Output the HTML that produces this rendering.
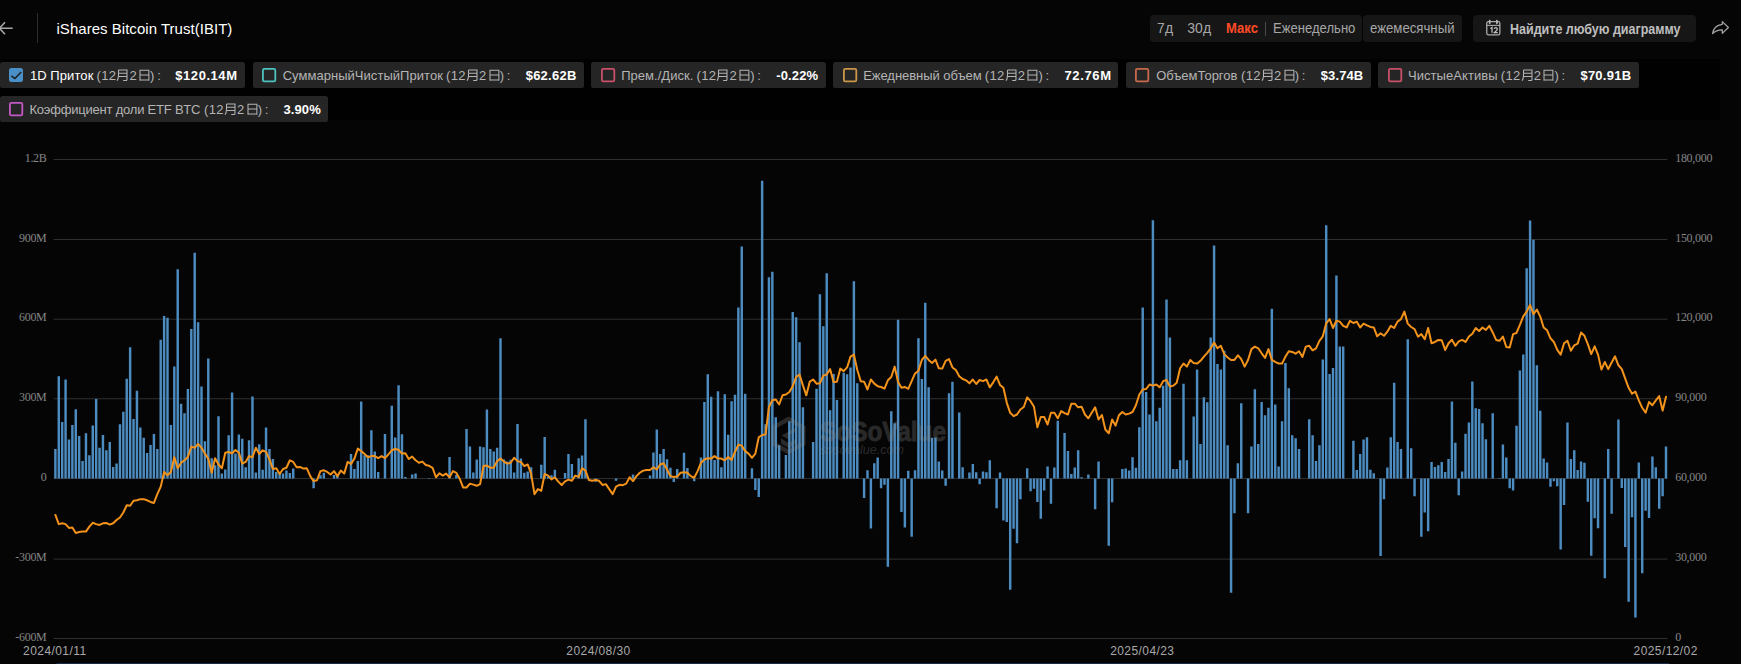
<!DOCTYPE html><html><head><meta charset="utf-8"><title>iShares Bitcoin Trust(IBIT)</title><style>
html,body{margin:0;padding:0;background:#050505;}
body{width:1741px;height:664px;overflow:hidden;position:relative;font-family:"Liberation Sans",sans-serif;}
.chart{position:absolute;left:0;top:0;}
.t{position:absolute;white-space:nowrap;line-height:1;}
.box{position:absolute;background:#161616;border-radius:4px;}
.chip{position:absolute;background:#252525;border-radius:2.5px;}
.cb{position:absolute;width:14.2px;height:14.2px;border-radius:2.5px;box-sizing:border-box;}
.yl{position:absolute;font-family:"Liberation Serif",serif;font-size:12px;color:#868686;line-height:1;white-space:nowrap;letter-spacing:-0.3px;}
.xl{position:absolute;font-size:12px;color:#a8a8a8;line-height:1;white-space:nowrap;}
.d{position:absolute;font-size:13px;color:#b4b4b4;line-height:1;white-space:nowrap;letter-spacing:0.3px;}
.d svg{display:inline-block;vertical-align:baseline;}
</style></head><body>
<div style="position:absolute;left:0;top:58.5px;width:1720px;height:61px;background:#010101"></div>
<svg class="chart" width="1741" height="664" viewBox="0 0 1741 664"><rect x="53.7" y="159" width="1613.6" height="1" fill="#303030"/><rect x="53.7" y="239" width="1613.6" height="1" fill="#303030"/><rect x="53.7" y="318.7" width="1613.6" height="1" fill="#303030"/><rect x="53.7" y="398.25" width="1613.6" height="1" fill="#303030"/><rect x="53.7" y="478.05" width="1613.6" height="1" fill="#303030"/><rect x="53.7" y="558.6" width="1613.6" height="1" fill="#303030"/><rect x="53.7" y="638" width="1613.6" height="1" fill="#303030"/><path fill="#4c8cc0" d="M54.16 478.55h2.45V448.96h-2.45zM57.55 478.55h2.45V376.16h-2.45zM60.95 478.55h2.45V421.97h-2.45zM64.35 478.55h2.45V379.5h-2.45zM67.75 478.55h2.45V439.46h-2.45zM71.14 478.55h2.45V424.97h-2.45zM74.54 478.55h2.45V409.31h-2.45zM77.94 478.55h2.45V435.96h-2.45zM81.34 478.55h2.45V460.95h-2.45zM84.74 478.55h2.45V433.13h-2.45zM88.13 478.55h2.45V455.29h-2.45zM91.53 478.55h2.45V425.47h-2.45zM94.93 478.55h2.45V398.98h-2.45zM98.33 478.55h2.45V447.79h-2.45zM101.73 478.55h2.45V434.96h-2.45zM105.12 478.55h2.45V450.29h-2.45zM108.52 478.55h2.45V441.96h-2.45zM111.92 478.55h2.45V466.95h-2.45zM115.32 478.55h2.45V463.61h-2.45zM118.72 478.55h2.45V424.14h-2.45zM122.11 478.55h2.45V411.64h-2.45zM125.51 478.55h2.45V378.66h-2.45zM128.91 478.55h2.45V347.31h-2.45zM132.31 478.55h2.45V418.97h-2.45zM135.71 478.55h2.45V390.66h-2.45zM139.1 478.55h2.45V427.47h-2.45zM142.5 478.55h2.45V437.8h-2.45zM145.9 478.55h2.45V452.95h-2.45zM149.3 478.55h2.45V444.96h-2.45zM152.7 478.55h2.45V433.96h-2.45zM156.09 478.55h2.45V448.96h-2.45zM159.49 478.55h2.45V339.82h-2.45zM162.89 478.55h2.45V316h-2.45zM166.29 478.55h2.45V317.66h-2.45zM169.68 478.55h2.45V424.97h-2.45zM173.08 478.55h2.45V366.47h-2.45zM176.48 478.55h2.45V269.14h-2.45zM179.88 478.55h2.45V403.65h-2.45zM183.28 478.55h2.45V413.31h-2.45zM186.67 478.55h2.45V388.99h-2.45zM190.07 478.55h2.45V328.99h-2.45zM193.47 478.55h2.45V252.81h-2.45zM196.87 478.55h2.45V322.33h-2.45zM200.27 478.55h2.45V386.49h-2.45zM203.66 478.55h2.45V441.13h-2.45zM207.06 478.55h2.45V358.47h-2.45zM210.46 478.55h2.45V458.28h-2.45zM213.86 478.55h2.45V465.28h-2.45zM217.26 478.55h2.45V416.14h-2.45zM220.65 478.55h2.45V473.61h-2.45zM224.05 478.55h2.45V469.44h-2.45zM227.45 478.55h2.45V435.3h-2.45zM230.85 478.55h2.45V392.49h-2.45zM234.25 478.55h2.45V453.62h-2.45zM237.64 478.55h2.45V434.46h-2.45zM241.04 478.55h2.45V438.63h-2.45zM244.44 478.55h2.45V467.28h-2.45zM247.84 478.55h2.45V440.29h-2.45zM251.24 478.55h2.45V396.49h-2.45zM254.63 478.55h2.45V472.44h-2.45zM258.03 478.55h2.45V444.13h-2.45zM261.43 478.55h2.45V469.78h-2.45zM264.83 478.55h2.45V427.47h-2.45zM268.22 478.55h2.45V448.96h-2.45zM271.62 478.55h2.45V458.95h-2.45zM275.02 478.55h2.45V471.94h-2.45zM278.42 478.55h2.45V473.61h-2.45zM281.82 478.55h2.45V473.61h-2.45zM285.21 478.55h2.45V470.61h-2.45zM288.61 478.55h2.45V473.11h-2.45zM292.01 478.55h2.45V468.61h-2.45zM312.4 478.55h2.45V488.31h-2.45zM319.19 478.55h2.45V475.27h-2.45zM322.59 478.55h2.45V472.78h-2.45zM332.79 478.55h2.45V474.94h-2.45zM336.18 478.55h2.45V476.11h-2.45zM349.78 478.55h2.45V453.95h-2.45zM353.17 478.55h2.45V468.94h-2.45zM356.57 478.55h2.45V461.12h-2.45zM359.97 478.55h2.45V401.48h-2.45zM363.37 478.55h2.45V455.29h-2.45zM366.76 478.55h2.45V455.29h-2.45zM370.16 478.55h2.45V430.3h-2.45zM373.56 478.55h2.45V451.45h-2.45zM376.96 478.55h2.45V471.94h-2.45zM383.75 478.55h2.45V433.96h-2.45zM390.55 478.55h2.45V405.81h-2.45zM393.95 478.55h2.45V437.46h-2.45zM397.35 478.55h2.45V385.33h-2.45zM400.74 478.55h2.45V434.13h-2.45zM404.14 478.55h2.45V476.94h-2.45zM410.94 478.55h2.45V474.44h-2.45zM414.34 478.55h2.45V473.61h-2.45zM427.93 478.55h2.45V477.94h-2.45zM448.32 478.55h2.45V456.95h-2.45zM455.11 478.55h2.45V474.94h-2.45zM465.3 478.55h2.45V428.97h-2.45zM468.7 478.55h2.45V446.46h-2.45zM472.1 478.55h2.45V472.44h-2.45zM475.5 478.55h2.45V459.45h-2.45zM478.9 478.55h2.45V446.62h-2.45zM482.29 478.55h2.45V447.29h-2.45zM485.69 478.55h2.45V409.48h-2.45zM489.09 478.55h2.45V449.12h-2.45zM492.49 478.55h2.45V451.45h-2.45zM495.89 478.55h2.45V447.79h-2.45zM499.28 478.55h2.45V338.31h-2.45zM502.68 478.55h2.45V459.45h-2.45zM506.08 478.55h2.45V461.45h-2.45zM509.48 478.55h2.45V459.78h-2.45zM512.88 478.55h2.45V472.44h-2.45zM516.27 478.55h2.45V423.97h-2.45zM519.67 478.55h2.45V458.62h-2.45zM523.07 478.55h2.45V472.78h-2.45zM526.47 478.55h2.45V471.61h-2.45zM529.87 478.55h2.45V467.28h-2.45zM540.06 478.55h2.45V464.78h-2.45zM543.46 478.55h2.45V436.96h-2.45zM546.86 478.55h2.45V476.61h-2.45zM550.25 478.55h2.45V475.27h-2.45zM553.65 478.55h2.45V469.78h-2.45zM563.84 478.55h2.45V473.11h-2.45zM567.24 478.55h2.45V453.95h-2.45zM570.64 478.55h2.45V463.95h-2.45zM577.44 478.55h2.45V458.28h-2.45zM580.83 478.55h2.45V455.62h-2.45zM584.23 478.55h2.45V419.31h-2.45zM594.43 478.55h2.45V481.64h-2.45zM614.81 478.55h2.45V480.81h-2.45zM631.8 478.55h2.45V474.44h-2.45zM648.79 478.55h2.45V475.61h-2.45zM652.19 478.55h2.45V452.45h-2.45zM655.59 478.55h2.45V429.47h-2.45zM658.99 478.55h2.45V453.95h-2.45zM662.38 478.55h2.45V449.12h-2.45zM665.78 478.55h2.45V459.28h-2.45zM669.18 478.55h2.45V467.78h-2.45zM672.58 478.55h2.45V481.98h-2.45zM675.98 478.55h2.45V469.11h-2.45zM682.77 478.55h2.45V452.79h-2.45zM686.17 478.55h2.45V468.11h-2.45zM692.97 478.55h2.45V481.14h-2.45zM699.76 478.55h2.45V457.45h-2.45zM703.16 478.55h2.45V401.98h-2.45zM706.56 478.55h2.45V374.17h-2.45zM709.96 478.55h2.45V396.65h-2.45zM713.35 478.55h2.45V459.95h-2.45zM716.75 478.55h2.45V391.16h-2.45zM720.15 478.55h2.45V467.28h-2.45zM723.55 478.55h2.45V394.15h-2.45zM726.95 478.55h2.45V434.8h-2.45zM730.34 478.55h2.45V401.15h-2.45zM733.74 478.55h2.45V394.82h-2.45zM737.14 478.55h2.45V307.48h-2.45zM740.54 478.55h2.45V246.62h-2.45zM743.94 478.55h2.45V393.82h-2.45zM750.73 478.55h2.45V468.28h-2.45zM754.13 478.55h2.45V489.97h-2.45zM757.53 478.55h2.45V496.97h-2.45zM760.92 478.55h2.45V180.83h-2.45zM764.32 478.55h2.45V424.14h-2.45zM767.72 478.55h2.45V277.16h-2.45zM771.12 478.55h2.45V271.67h-2.45zM774.52 478.55h2.45V417.31h-2.45zM777.91 478.55h2.45V445.29h-2.45zM784.71 478.55h2.45V454.95h-2.45zM788.11 478.55h2.45V421.14h-2.45zM791.51 478.55h2.45V311.98h-2.45zM794.9 478.55h2.45V317.14h-2.45zM798.3 478.55h2.45V342.13h-2.45zM801.7 478.55h2.45V407.31h-2.45zM811.89 478.55h2.45V441.96h-2.45zM815.29 478.55h2.45V388.66h-2.45zM818.69 478.55h2.45V294.15h-2.45zM822.09 478.55h2.45V326.3h-2.45zM825.49 478.55h2.45V273.33h-2.45zM828.88 478.55h2.45V410.31h-2.45zM832.28 478.55h2.45V374.11h-2.45zM835.68 478.55h2.45V399.98h-2.45zM842.48 478.55h2.45V372.83h-2.45zM845.87 478.55h2.45V374.17h-2.45zM849.27 478.55h2.45V367.44h-2.45zM852.67 478.55h2.45V281.33h-2.45zM856.07 478.55h2.45V383.16h-2.45zM862.86 478.55h2.45V497.97h-2.45zM866.26 478.55h2.45V470.28h-2.45zM869.66 478.55h2.45V528.62h-2.45zM873.06 478.55h2.45V463.28h-2.45zM876.45 478.55h2.45V457.45h-2.45zM879.85 478.55h2.45V488.31h-2.45zM883.25 478.55h2.45V484.64h-2.45zM886.65 478.55h2.45V566.65h-2.45zM890.05 478.55h2.45V411.14h-2.45zM893.44 478.55h2.45V423.14h-2.45zM896.84 478.55h2.45V319.64h-2.45zM900.24 478.55h2.45V511.96h-2.45zM903.64 478.55h2.45V527.45h-2.45zM907.04 478.55h2.45V470.78h-2.45zM910.43 478.55h2.45V536.63h-2.45zM913.83 478.55h2.45V470.28h-2.45zM917.23 478.55h2.45V338.29h-2.45zM920.63 478.55h2.45V379h-2.45zM924.03 478.55h2.45V302.81h-2.45zM927.42 478.55h2.45V387.32h-2.45zM930.82 478.55h2.45V437.8h-2.45zM934.22 478.55h2.45V437.46h-2.45zM937.62 478.55h2.45V461.62h-2.45zM941.02 478.55h2.45V470.61h-2.45zM944.41 478.55h2.45V485.82h-2.45zM947.81 478.55h2.45V393.15h-2.45zM951.21 478.55h2.45V381.66h-2.45zM958.01 478.55h2.45V412.48h-2.45zM961.4 478.55h2.45V467.28h-2.45zM968.2 478.55h2.45V472.44h-2.45zM971.6 478.55h2.45V464.11h-2.45zM974.99 478.55h2.45V472.28h-2.45zM978.39 478.55h2.45V484.16h-2.45zM981.79 478.55h2.45V471.61h-2.45zM985.19 478.55h2.45V472.28h-2.45zM988.59 478.55h2.45V460.28h-2.45zM995.38 478.55h2.45V508.31h-2.45zM998.78 478.55h2.45V472.61h-2.45zM1002.18 478.55h2.45V520.47h-2.45zM1005.58 478.55h2.45V521.97h-2.45zM1008.97 478.55h2.45V589.8h-2.45zM1012.37 478.55h2.45V528.63h-2.45zM1015.77 478.55h2.45V543.29h-2.45zM1019.17 478.55h2.45V499.15h-2.45zM1025.96 478.55h2.45V468.28h-2.45zM1029.36 478.55h2.45V491.32h-2.45zM1032.76 478.55h2.45V488.66h-2.45zM1036.16 478.55h2.45V501.98h-2.45zM1039.56 478.55h2.45V518.64h-2.45zM1042.95 478.55h2.45V490.49h-2.45zM1046.35 478.55h2.45V466.45h-2.45zM1049.75 478.55h2.45V503.65h-2.45zM1053.15 478.55h2.45V467.45h-2.45zM1056.55 478.55h2.45V420.81h-2.45zM1063.34 478.55h2.45V432.96h-2.45zM1066.74 478.55h2.45V451.12h-2.45zM1070.14 478.55h2.45V473.94h-2.45zM1073.53 478.55h2.45V467.45h-2.45zM1076.93 478.55h2.45V450.29h-2.45zM1080.33 478.55h2.45V477.27h-2.45zM1087.13 478.55h2.45V474.44h-2.45zM1093.92 478.55h2.45V509.14h-2.45zM1097.32 478.55h2.45V461.45h-2.45zM1107.51 478.55h2.45V545.79h-2.45zM1110.91 478.55h2.45V502.15h-2.45zM1121.11 478.55h2.45V468.94h-2.45zM1124.5 478.55h2.45V468.61h-2.45zM1127.9 478.55h2.45V470.61h-2.45zM1131.3 478.55h2.45V457.28h-2.45zM1134.7 478.55h2.45V467.78h-2.45zM1138.1 478.55h2.45V427.3h-2.45zM1141.49 478.55h2.45V307.48h-2.45zM1144.89 478.55h2.45V391.99h-2.45zM1148.29 478.55h2.45V414.48h-2.45zM1151.69 478.55h2.45V220.3h-2.45zM1155.09 478.55h2.45V421.14h-2.45zM1158.48 478.55h2.45V407.81h-2.45zM1161.88 478.55h2.45V385.66h-2.45zM1165.28 478.55h2.45V299.48h-2.45zM1168.68 478.55h2.45V337.46h-2.45zM1172.07 478.55h2.45V468.94h-2.45zM1175.47 478.55h2.45V468.94h-2.45zM1178.87 478.55h2.45V460.28h-2.45zM1182.27 478.55h2.45V383.66h-2.45zM1185.67 478.55h2.45V460.28h-2.45zM1192.46 478.55h2.45V416.47h-2.45zM1195.86 478.55h2.45V369.61h-2.45zM1199.26 478.55h2.45V443.96h-2.45zM1202.66 478.55h2.45V397.32h-2.45zM1206.05 478.55h2.45V402.32h-2.45zM1209.45 478.55h2.45V337.46h-2.45zM1212.85 478.55h2.45V245.46h-2.45zM1216.25 478.55h2.45V364.11h-2.45zM1219.65 478.55h2.45V369.61h-2.45zM1223.04 478.55h2.45V350.79h-2.45zM1226.44 478.55h2.45V445.29h-2.45zM1229.84 478.55h2.45V592.8h-2.45zM1233.24 478.55h2.45V513.31h-2.45zM1236.64 478.55h2.45V463.28h-2.45zM1240.03 478.55h2.45V403.32h-2.45zM1246.83 478.55h2.45V513.31h-2.45zM1250.23 478.55h2.45V446.46h-2.45zM1253.63 478.55h2.45V389.16h-2.45zM1257.02 478.55h2.45V443.96h-2.45zM1260.42 478.55h2.45V401.98h-2.45zM1263.82 478.55h2.45V415.31h-2.45zM1267.22 478.55h2.45V407.81h-2.45zM1270.61 478.55h2.45V308.64h-2.45zM1274.01 478.55h2.45V404.48h-2.45zM1277.41 478.55h2.45V466.45h-2.45zM1280.81 478.55h2.45V421.14h-2.45zM1284.21 478.55h2.45V362.95h-2.45zM1287.6 478.55h2.45V388.32h-2.45zM1291 478.55h2.45V435.3h-2.45zM1294.4 478.55h2.45V438.13h-2.45zM1297.8 478.55h2.45V448.96h-2.45zM1307.99 478.55h2.45V419.31h-2.45zM1311.39 478.55h2.45V435.3h-2.45zM1314.79 478.55h2.45V461.12h-2.45zM1318.19 478.55h2.45V445.29h-2.45zM1321.58 478.55h2.45V359.45h-2.45zM1324.98 478.55h2.45V225.3h-2.45zM1328.38 478.55h2.45V374h-2.45zM1331.78 478.55h2.45V367.94h-2.45zM1335.18 478.55h2.45V275.5h-2.45zM1338.57 478.55h2.45V346.62h-2.45zM1341.97 478.55h2.45V346.62h-2.45zM1352.17 478.55h2.45V440.63h-2.45zM1355.56 478.55h2.45V469.94h-2.45zM1358.96 478.55h2.45V453.95h-2.45zM1362.36 478.55h2.45V439.46h-2.45zM1365.76 478.55h2.45V437.3h-2.45zM1369.15 478.55h2.45V469.78h-2.45zM1372.55 478.55h2.45V473.28h-2.45zM1379.35 478.55h2.45V556.12h-2.45zM1382.75 478.55h2.45V499.15h-2.45zM1386.14 478.55h2.45V467.45h-2.45zM1389.54 478.55h2.45V437.3h-2.45zM1392.94 478.55h2.45V382.83h-2.45zM1396.34 478.55h2.45V441.96h-2.45zM1399.74 478.55h2.45V448.96h-2.45zM1406.53 478.55h2.45V339.29h-2.45zM1409.93 478.55h2.45V448.29h-2.45zM1413.33 478.55h2.45V496.32h-2.45zM1420.12 478.55h2.45V536.63h-2.45zM1423.52 478.55h2.45V512.48h-2.45zM1426.92 478.55h2.45V531.3h-2.45zM1430.32 478.55h2.45V461.95h-2.45zM1433.72 478.55h2.45V466.95h-2.45zM1437.11 478.55h2.45V465.28h-2.45zM1440.51 478.55h2.45V461.95h-2.45zM1443.91 478.55h2.45V471.94h-2.45zM1447.31 478.55h2.45V459.12h-2.45zM1450.71 478.55h2.45V401.48h-2.45zM1454.1 478.55h2.45V442.79h-2.45zM1457.5 478.55h2.45V495.32h-2.45zM1460.9 478.55h2.45V471.61h-2.45zM1464.3 478.55h2.45V433.63h-2.45zM1467.69 478.55h2.45V422.47h-2.45zM1471.09 478.55h2.45V381.49h-2.45zM1474.49 478.55h2.45V408.31h-2.45zM1477.89 478.55h2.45V408.98h-2.45zM1481.29 478.55h2.45V423.14h-2.45zM1484.68 478.55h2.45V439.13h-2.45zM1491.48 478.55h2.45V413.14h-2.45zM1498.28 478.55h2.45V477.94h-2.45zM1501.67 478.55h2.45V444.46h-2.45zM1505.07 478.55h2.45V457.45h-2.45zM1508.47 478.55h2.45V488.32h-2.45zM1511.87 478.55h2.45V490.49h-2.45zM1515.27 478.55h2.45V425.64h-2.45zM1518.66 478.55h2.45V370.44h-2.45zM1522.06 478.55h2.45V354.62h-2.45zM1525.46 478.55h2.45V268.28h-2.45zM1528.86 478.55h2.45V220.47h-2.45zM1532.26 478.55h2.45V239.63h-2.45zM1535.65 478.55h2.45V365.28h-2.45zM1539.05 478.55h2.45V410.64h-2.45zM1542.45 478.55h2.45V458.62h-2.45zM1545.85 478.55h2.45V462.45h-2.45zM1549.25 478.55h2.45V486.66h-2.45zM1552.64 478.55h2.45V481.33h-2.45zM1556.04 478.55h2.45V486.32h-2.45zM1559.44 478.55h2.45V549.62h-2.45zM1562.84 478.55h2.45V504.98h-2.45zM1566.23 478.55h2.45V422.47h-2.45zM1569.63 478.55h2.45V459.12h-2.45zM1573.03 478.55h2.45V450.29h-2.45zM1576.43 478.55h2.45V469.94h-2.45zM1579.83 478.55h2.45V461.45h-2.45zM1583.22 478.55h2.45V462.78h-2.45zM1586.62 478.55h2.45V501.65h-2.45zM1590.02 478.55h2.45V555.78h-2.45zM1593.42 478.55h2.45V518.31h-2.45zM1596.82 478.55h2.45V528.3h-2.45zM1603.61 478.55h2.45V578.32h-2.45zM1607.01 478.55h2.45V448.96h-2.45zM1610.41 478.55h2.45V513.64h-2.45zM1617.2 478.55h2.45V419.47h-2.45zM1620.6 478.55h2.45V487.99h-2.45zM1624 478.55h2.45V546.96h-2.45zM1627.4 478.55h2.45V601.64h-2.45zM1630.8 478.55h2.45V517.14h-2.45zM1634.19 478.55h2.45V617.46h-2.45zM1637.59 478.55h2.45V462.45h-2.45zM1640.99 478.55h2.45V573.27h-2.45zM1644.39 478.55h2.45V510.81h-2.45zM1647.79 478.55h2.45V517.97h-2.45zM1651.18 478.55h2.45V456.62h-2.45zM1654.58 478.55h2.45V467.28h-2.45zM1657.98 478.55h2.45V508.64h-2.45zM1661.38 478.55h2.45V496.15h-2.45zM1664.78 478.55h2.45V446.62h-2.45z"/><g opacity="0.27" fill="#8a8a8a"><path fill-rule="evenodd" d="M788.5 416.5 L805.5 426 V445 L788.5 454.5 L771.5 445 V426 Z M788.5 421.5 L776 428.6 V442.4 L788.5 449.5 L801 442.4 V428.6 Z"/><path d="M789 424.5 L780 430 L786 433.5 L789 431.8 L797.5 436.8 V441.8 L789 446.5 L783 443 L780 444.8 L789 450 L801 443.2 V434.6 L789 427.8 L786.5 429.3 Z" fill-opacity="0"/><path d="M796 427.5 L781.5 435.5 L788 439.2 V435.8 L796 431.2 Z M781 438.5 V443.8 L788.5 448 L796 443.8 V438.6 L788.5 443 Z"/><text x="820" y="440.8" font-family="Liberation Sans, sans-serif" font-weight="bold" font-size="27" stroke="#8a8a8a" stroke-width="0.9" textLength="126" lengthAdjust="spacingAndGlyphs">SoSoValue</text><text x="820" y="454" font-family="Liberation Sans, sans-serif" font-style="italic" font-size="12.5" textLength="84" lengthAdjust="spacingAndGlyphs">sosovalue.com</text></g><polyline fill="none" stroke="#f4931b" stroke-width="2" stroke-linejoin="round" stroke-linecap="round" points="55.38,514.96 58.78,524.12 62.18,523.29 65.57,524.12 68.97,527.95 72.37,527.45 75.77,532.95 79.17,531.95 82.56,531.61 85.96,531.61 89.36,526.62 92.76,522.79 96.16,524.12 99.55,524.95 102.95,523.29 106.35,522.95 109.75,524.62 113.14,523.29 116.54,519.95 119.94,517.46 123.34,512.46 126.74,505.3 130.13,505.8 133.53,500.8 136.93,500.3 140.33,499.13 143.73,499.13 147.12,500.3 150.52,501.96 153.92,502.96 157.32,494.14 160.72,486.64 164.11,471.94 167.51,475.27 170.91,471.94 174.31,457.28 177.71,468.28 181.1,462.78 184.5,460.28 187.9,456.95 191.3,446.62 194.7,447.79 198.09,443.96 201.49,447.79 204.89,453.62 208.29,458.62 211.68,472.78 215.08,458.28 218.48,464.45 221.88,468.28 225.28,452.79 228.67,451.95 232.07,453.29 235.47,449.96 238.87,452.79 242.27,463.61 245.66,461.95 249.06,456.12 252.46,457.28 255.86,447.79 259.26,453.95 262.65,450.29 266.05,451.95 269.45,459.45 272.85,468.94 276.25,468.28 279.64,473.94 283.04,468.94 286.44,467.78 289.84,460.28 293.24,461.95 296.63,467.28 300.03,466.95 303.43,468.61 306.83,468.28 310.22,476.11 313.62,481.1 317.02,480.27 320.42,471.11 323.82,470.28 327.21,471.94 330.61,474.44 334.01,471.11 337.41,476.11 340.81,470.61 344.2,473.61 347.6,461.95 351,463.95 354.4,458.62 357.8,448.62 361.19,451.12 364.59,453.95 367.99,457.28 371.39,456.12 374.79,456.12 378.18,458.12 381.58,456.12 384.98,458.12 388.38,454.45 391.78,450.29 395.17,448.96 398.57,449.79 401.97,453.62 405.37,453.29 408.76,458.95 412.16,456.62 415.56,460.28 418.96,462.78 422.36,461.62 425.75,464.95 429.15,465.78 432.55,467.78 435.95,477.27 439.35,473.28 442.74,475.61 446.14,473.61 449.54,477.27 452.94,471.11 456.34,472.78 459.73,478.87 463.13,487.47 466.53,487.47 469.93,483.64 473.33,484.64 476.72,485.81 480.12,484.14 483.52,466.11 486.92,465.61 490.32,467.78 493.71,467.78 497.11,461.12 500.51,458.62 503.91,461.62 507.31,463.61 510.7,462.78 514.1,457.78 517.5,461.12 520.9,461.95 524.29,466.11 527.69,464.45 531.09,473.61 534.49,494.14 537.89,489.14 541.28,490.8 544.68,473.94 548.08,475.61 551.48,479.44 554.88,477.27 558.27,481.64 561.67,484.97 565.07,481.31 568.47,479.64 571.87,480.81 575.26,475.61 578.66,476.94 582.06,468.28 585.46,470.61 588.86,479.94 592.25,480.81 595.65,479.98 599.05,480.81 602.45,484.97 605.85,484.14 609.24,489.14 612.64,494.14 616.04,486.64 619.44,484.81 622.83,485.14 626.23,483.64 629.63,477.27 633.03,481.1 636.43,476.11 639.82,472.78 643.22,470.61 646.62,469.94 650.02,469.94 653.42,467.28 656.81,469.44 660.21,464.45 663.61,463.28 667.01,469.44 670.41,476.11 673.8,476.94 677.2,476.61 680.6,472.78 684,472.28 687.4,472.78 690.79,476.11 694.19,477.77 697.59,471.11 700.99,462.78 704.39,459.45 707.78,458.28 711.18,458.62 714.58,456.12 717.98,458.62 721.37,458.62 724.77,460.28 728.17,456.95 731.57,459.95 734.97,451.95 738.36,444.79 741.76,445.62 745.16,451.12 748.56,453.62 751.96,457.78 755.35,453.62 758.75,437.3 762.15,434.96 765.55,434.46 768.95,406.98 772.34,400.32 775.74,399.48 779.14,404.48 782.54,395.32 785.94,394.49 789.33,391.99 792.73,386.16 796.13,377 799.53,374.5 802.93,385.33 806.32,395.32 809.72,381.66 813.12,379.5 816.52,383.66 819.91,383.33 823.31,375.66 826.71,374.5 830.11,369.11 833.51,381.99 836.9,381.66 840.3,368.61 843.7,371.11 847.1,367.44 850.5,356.62 853.89,354.62 857.29,369.94 860.69,381.16 864.09,381.66 867.49,389.49 870.88,379.5 874.28,383.66 877.68,386.16 881.08,386.99 884.48,388.66 887.87,380.33 891.27,377 894.67,366.61 898.07,381.99 901.47,387.82 904.86,386.99 908.26,388.82 911.66,381.16 915.06,373.47 918.45,370.78 921.85,359.95 925.25,355.78 928.65,359.95 932.05,362.95 935.44,359.62 938.84,368.28 942.24,368.61 945.64,360.78 949.04,359.12 952.43,367.44 955.83,369.94 959.23,376.16 962.63,379 966.03,380.33 969.42,383.33 972.82,379.5 976.22,383.99 979.62,380 983.02,381.16 986.41,379.5 989.81,387.32 993.21,382.33 996.61,376.66 1000.01,384.99 1003.4,387.82 1006.8,402.82 1010.2,412.81 1013.6,416.14 1016.99,414.48 1020.39,409.48 1023.79,406.98 1027.19,397.32 1030.59,401.15 1033.98,406.65 1037.38,427.3 1040.78,416.97 1044.18,416.97 1047.58,424.47 1050.97,412.81 1054.37,412.81 1057.77,418.31 1061.17,411.14 1064.57,413.14 1067.96,414.48 1071.36,403.65 1074.76,403.65 1078.16,407.31 1081.56,406.65 1084.95,414.48 1088.35,418.31 1091.75,412.81 1095.15,407.31 1098.55,419.47 1101.94,414.98 1105.34,429.47 1108.74,433.3 1112.14,419.47 1115.53,425.64 1118.93,415.31 1122.33,411.98 1125.73,414.48 1129.13,413.64 1132.52,411.98 1135.92,405.31 1139.32,394.49 1142.72,389.49 1146.12,388.99 1149.51,384.49 1152.91,385.66 1156.31,384.49 1159.71,387.32 1163.11,381.16 1166.5,380 1169.9,386.66 1173.3,385.66 1176.7,382.83 1180.1,368.28 1183.49,363.61 1186.89,366.61 1190.29,359.95 1193.69,363.11 1197.09,363.61 1200.48,360.78 1203.88,356.62 1207.28,352.79 1210.68,348.29 1214.07,342.46 1217.47,348.29 1220.87,345.79 1224.27,354.12 1227.67,357.45 1231.06,359.95 1234.46,359.95 1237.86,355.28 1241.26,359.12 1244.66,366.61 1248.05,359.95 1251.45,349.12 1254.85,346.62 1258.25,348.29 1261.65,353.29 1265.04,357.95 1268.44,349.12 1271.84,359.95 1275.24,361.95 1278.64,363.61 1282.03,363.61 1285.43,356.62 1288.83,351.29 1292.23,351.95 1295.63,353.62 1299.02,351.29 1302.42,356.95 1305.82,346.62 1309.22,345.79 1312.62,350.29 1316.01,348.29 1319.41,340.79 1322.81,336.3 1326.21,323.3 1329.6,319.14 1333,327.97 1336.4,320.8 1339.8,321.64 1343.2,325.8 1346.59,327.47 1349.99,320.8 1353.39,322.97 1356.79,321.64 1360.19,327.47 1363.58,323.64 1366.98,325.3 1370.38,326.97 1373.78,327.47 1377.18,336.3 1380.57,333.3 1383.97,335.8 1387.37,331.63 1390.77,325.8 1394.17,327.97 1397.56,321.64 1400.96,319.14 1404.36,311.64 1407.76,323.64 1411.16,326.97 1414.55,329.13 1417.95,336.63 1421.35,334.13 1424.75,339.13 1428.14,327.97 1431.54,343.29 1434.94,341.96 1438.34,339.96 1441.74,340.29 1445.13,349.95 1448.53,343.29 1451.93,339.79 1455.33,345.79 1458.73,341.46 1462.12,339.96 1465.52,341.96 1468.92,336.46 1472.32,333.71 1475.72,328.13 1479.11,331.05 1482.51,327.47 1485.91,329.97 1489.31,325.8 1492.71,332.46 1496.1,339.96 1499.5,340.79 1502.9,336.63 1506.3,346.96 1509.7,347.46 1513.09,334.13 1516.49,332.96 1519.89,324.97 1523.29,316.31 1526.68,311.64 1530.08,304.98 1533.48,314.14 1536.88,309.64 1540.28,316.64 1543.67,327.47 1547.07,330.3 1550.47,338.29 1553.87,341.96 1557.27,349.95 1560.66,354.62 1564.06,343.29 1567.46,340.79 1570.86,350.79 1574.26,345.29 1577.65,343.62 1581.05,332.46 1584.45,335.8 1587.85,344.12 1591.25,354.12 1594.64,346.29 1598.04,354.62 1601.44,369.61 1604.84,361.95 1608.24,369.11 1611.63,362.45 1615.03,356.28 1618.43,365.28 1621.83,369.11 1625.22,378.66 1628.62,387.82 1632.02,393.65 1635.42,391.66 1638.82,400.32 1642.21,407.81 1645.61,412.81 1649.01,401.98 1652.41,405.31 1655.81,400.32 1659.2,396.15 1662.6,410.64 1666,396.65"/><rect x="56.5" y="663" width="1612.5" height="1" fill="#1b2a44"/></svg>
<svg style="position:absolute;left:0;top:20px" width="14" height="16" viewBox="0 20 14 16"><path d="M12.7 28.3H0.2M5 22.3L-0.6 28.3L5 34.2" fill="none" stroke="#a8a8a8" stroke-width="1.6"/></svg>
<div style="position:absolute;left:37px;top:13px;width:1px;height:30px;background:#2c2c2c"></div>
<div class="box" style="left:1150.2px;top:15.2px;width:212px;height:26.5px"></div>
<div class="box" style="left:1362.5px;top:15.2px;width:99.5px;height:26.5px"></div>
<div style="position:absolute;left:1264.6px;top:21.6px;width:1.2px;height:14.2px;background:#4a4a4a"></div>
<div class="box" style="left:1473px;top:15.2px;width:223px;height:26.5px"></div>
<svg style="position:absolute;left:1485px;top:19px" width="18" height="18" viewBox="0 0 18 18"><rect x="1.75" y="2.65" width="13.1" height="13.2" rx="1.6" fill="none" stroke="#a9a9a9" stroke-width="1.3"/><path d="M1.75 6.4H14.85" stroke="#a9a9a9" stroke-width="1.1" fill="none"/><path d="M4.7 1.5V4.3M11.9 1.5V4.3" stroke="#b8b8b8" stroke-width="1.7" stroke-linecap="round" fill="none"/><path d="M5.4 9.6L7 8.5V13.8M9.3 9.9Q9.4 8.5 10.8 8.5Q12.3 8.5 12.3 9.9Q12.3 10.9 9.3 13.6H12.7" fill="none" stroke="#c2c2c2" stroke-width="1.25"/></svg>
<svg style="position:absolute;left:1710px;top:18px" width="20" height="18" viewBox="0 0 20 18"><path d="M12.3 3.6L18.4 9.5L12.3 15.4V11.8Q6.5 11.6 2.6 15.6Q3.6 7.4 12.3 6.3Z" fill="none" stroke="#a4a4a4" stroke-width="1.25" stroke-linejoin="round"/></svg>
<div class="chip" style="left:0px;top:62px;width:245px;height:25.7px"></div>
<div class="cb" style="left:9px;top:68.1px;background:#4a90c8"></div>
<svg style="position:absolute;left:9px;top:68.1px" width="15" height="15" viewBox="0 0 15 15"><path d="M2.4 7.8L5.9 10.6L12.2 3.9" fill="none" stroke="#1f1f1f" stroke-width="1.5"/></svg>
<div class="d" style="left:96.5px;top:68.2px">(12<svg width="13.2" height="14" viewBox="0 0 13.2 14" style="margin-bottom:-2px"><path d="M2.5 2H11V11.6Q11 12.6 9.9 12.6H7.2M2.5 2V7.6Q2.5 10.9 1.0 12.8M2.5 5.2H11M2.5 8.6H11" fill="none" stroke="#b4b4b4" stroke-width="1.05"/></svg>2<svg width="13.2" height="14" viewBox="0 0 13.2 14" style="margin-bottom:-2px"><path d="M3 12.8V2.2H11.9V12.8M3 7.1H11.9M3 12H11.9" fill="none" stroke="#b4b4b4" stroke-width="1.05"/></svg><span style="letter-spacing:-0.45px">) :</span></div>
<div class="chip" style="left:253px;top:62px;width:330.75px;height:25.7px"></div>
<svg style="position:absolute;left:262.2px;top:68.1px" width="15" height="15" viewBox="0 0 15 15"><rect x="0.9" y="0.9" width="12.4" height="12.4" rx="1.4" fill="none" stroke="#4dc3be" stroke-width="1.8"/></svg>
<div class="d" style="left:446.1px;top:68.2px">(12<svg width="13.2" height="14" viewBox="0 0 13.2 14" style="margin-bottom:-2px"><path d="M2.5 2H11V11.6Q11 12.6 9.9 12.6H7.2M2.5 2V7.6Q2.5 10.9 1.0 12.8M2.5 5.2H11M2.5 8.6H11" fill="none" stroke="#b4b4b4" stroke-width="1.05"/></svg>2<svg width="13.2" height="14" viewBox="0 0 13.2 14" style="margin-bottom:-2px"><path d="M3 12.8V2.2H11.9V12.8M3 7.1H11.9M3 12H11.9" fill="none" stroke="#b4b4b4" stroke-width="1.05"/></svg><span style="letter-spacing:-0.45px">) :</span></div>
<div class="chip" style="left:591.25px;top:62px;width:235px;height:25.7px"></div>
<svg style="position:absolute;left:601.1px;top:68.1px" width="15" height="15" viewBox="0 0 15 15"><rect x="0.9" y="0.9" width="12.4" height="12.4" rx="1.4" fill="none" stroke="#c9506a" stroke-width="1.8"/></svg>
<div class="d" style="left:696.6px;top:68.2px">(12<svg width="13.2" height="14" viewBox="0 0 13.2 14" style="margin-bottom:-2px"><path d="M2.5 2H11V11.6Q11 12.6 9.9 12.6H7.2M2.5 2V7.6Q2.5 10.9 1.0 12.8M2.5 5.2H11M2.5 8.6H11" fill="none" stroke="#b4b4b4" stroke-width="1.05"/></svg>2<svg width="13.2" height="14" viewBox="0 0 13.2 14" style="margin-bottom:-2px"><path d="M3 12.8V2.2H11.9V12.8M3 7.1H11.9M3 12H11.9" fill="none" stroke="#b4b4b4" stroke-width="1.05"/></svg><span style="letter-spacing:-0.45px">) :</span></div>
<div class="chip" style="left:833.25px;top:62px;width:284.75px;height:25.7px"></div>
<svg style="position:absolute;left:843.1px;top:68.1px" width="15" height="15" viewBox="0 0 15 15"><rect x="0.9" y="0.9" width="12.4" height="12.4" rx="1.4" fill="none" stroke="#cc9648" stroke-width="1.8"/></svg>
<div class="d" style="left:984.85px;top:68.2px">(12<svg width="13.2" height="14" viewBox="0 0 13.2 14" style="margin-bottom:-2px"><path d="M2.5 2H11V11.6Q11 12.6 9.9 12.6H7.2M2.5 2V7.6Q2.5 10.9 1.0 12.8M2.5 5.2H11M2.5 8.6H11" fill="none" stroke="#b4b4b4" stroke-width="1.05"/></svg>2<svg width="13.2" height="14" viewBox="0 0 13.2 14" style="margin-bottom:-2px"><path d="M3 12.8V2.2H11.9V12.8M3 7.1H11.9M3 12H11.9" fill="none" stroke="#b4b4b4" stroke-width="1.05"/></svg><span style="letter-spacing:-0.45px">) :</span></div>
<div class="chip" style="left:1126.25px;top:62px;width:244.5px;height:25.7px"></div>
<svg style="position:absolute;left:1135.1px;top:68.1px" width="15" height="15" viewBox="0 0 15 15"><rect x="0.9" y="0.9" width="12.4" height="12.4" rx="1.4" fill="none" stroke="#c9694b" stroke-width="1.8"/></svg>
<div class="d" style="left:1241.1px;top:68.2px">(12<svg width="13.2" height="14" viewBox="0 0 13.2 14" style="margin-bottom:-2px"><path d="M2.5 2H11V11.6Q11 12.6 9.9 12.6H7.2M2.5 2V7.6Q2.5 10.9 1.0 12.8M2.5 5.2H11M2.5 8.6H11" fill="none" stroke="#b4b4b4" stroke-width="1.05"/></svg>2<svg width="13.2" height="14" viewBox="0 0 13.2 14" style="margin-bottom:-2px"><path d="M3 12.8V2.2H11.9V12.8M3 7.1H11.9M3 12H11.9" fill="none" stroke="#b4b4b4" stroke-width="1.05"/></svg><span style="letter-spacing:-0.45px">) :</span></div>
<div class="chip" style="left:1378px;top:62px;width:261px;height:25.7px"></div>
<svg style="position:absolute;left:1388.1px;top:68.1px" width="15" height="15" viewBox="0 0 15 15"><rect x="0.9" y="0.9" width="12.4" height="12.4" rx="1.4" fill="none" stroke="#c9506a" stroke-width="1.8"/></svg>
<div class="d" style="left:1500.85px;top:68.2px">(12<svg width="13.2" height="14" viewBox="0 0 13.2 14" style="margin-bottom:-2px"><path d="M2.5 2H11V11.6Q11 12.6 9.9 12.6H7.2M2.5 2V7.6Q2.5 10.9 1.0 12.8M2.5 5.2H11M2.5 8.6H11" fill="none" stroke="#b4b4b4" stroke-width="1.05"/></svg>2<svg width="13.2" height="14" viewBox="0 0 13.2 14" style="margin-bottom:-2px"><path d="M3 12.8V2.2H11.9V12.8M3 7.1H11.9M3 12H11.9" fill="none" stroke="#b4b4b4" stroke-width="1.05"/></svg><span style="letter-spacing:-0.45px">) :</span></div>
<div class="chip" style="left:0px;top:96px;width:328px;height:25.7px"></div>
<svg style="position:absolute;left:9px;top:102.1px" width="15" height="15" viewBox="0 0 15 15"><rect x="0.9" y="0.9" width="12.4" height="12.4" rx="1.4" fill="none" stroke="#c458c4" stroke-width="1.8"/></svg>
<div class="d" style="left:204.1px;top:101.95px">(12<svg width="13.2" height="14" viewBox="0 0 13.2 14" style="margin-bottom:-2px"><path d="M2.5 2H11V11.6Q11 12.6 9.9 12.6H7.2M2.5 2V7.6Q2.5 10.9 1.0 12.8M2.5 5.2H11M2.5 8.6H11" fill="none" stroke="#b4b4b4" stroke-width="1.05"/></svg>2<svg width="13.2" height="14" viewBox="0 0 13.2 14" style="margin-bottom:-2px"><path d="M3 12.8V2.2H11.9V12.8M3 7.1H11.9M3 12H11.9" fill="none" stroke="#b4b4b4" stroke-width="1.05"/></svg><span style="letter-spacing:-0.45px">) :</span></div>
<div class="t" id="title" style="left:56.5px;top:21.1px;font-size:15px;font-weight:normal;color:#ffffff;letter-spacing:0.03px">iShares Bitcoin Trust(IBIT)</div>
<div class="t" id="p7" style="left:1157px;top:21.45px;font-size:14px;font-weight:normal;color:#a6a6a6;letter-spacing:0.12px">7д</div>
<div class="t" id="p30" style="left:1187.3px;top:21.45px;font-size:14px;font-weight:normal;color:#a6a6a6;letter-spacing:0.02px">30д</div>
<div class="t" id="pmax" style="left:1225.7px;top:21.45px;font-size:14px;font-weight:bold;color:#ff4a26;transform-origin:0 50%;transform:scaleX(0.9318)">Макс</div>
<div class="t" id="pwk" style="left:1273.2px;top:21.45px;font-size:14px;font-weight:normal;color:#a6a6a6;transform-origin:0 50%;transform:scaleX(0.9345)">Еженедельно</div>
<div class="t" id="pmo" style="left:1370.4px;top:21.45px;font-size:14px;font-weight:normal;color:#a6a6a6;transform-origin:0 50%;transform:scaleX(0.9422)">ежемесячный</div>
<div class="t" id="find" style="left:1510.4px;top:22.15px;font-size:14px;font-weight:bold;color:#bfbfbf;transform-origin:0 50%;transform:scaleX(0.8924)">Найдите любую диаграмму</div>
<div class="t" id="lab0" style="left:29.9px;top:69px;font-size:13px;font-weight:normal;color:#ffffff;letter-spacing:0.08px">1D Приток</div>
<div class="t" id="val0" style="left:175.3px;top:69px;font-size:13px;font-weight:bold;color:#ffffff;letter-spacing:0.55px">$120.14M</div>
<div class="t" id="lab1" style="left:282.65px;top:69px;font-size:13px;font-weight:normal;color:#b4b4b4;letter-spacing:0.04px">СуммарныйЧистыйПриток</div>
<div class="t" id="val1" style="left:525.65px;top:69px;font-size:13px;font-weight:bold;color:#ffffff;letter-spacing:0.26px">$62.62B</div>
<div class="t" id="lab2" style="left:621.15px;top:69px;font-size:13px;font-weight:normal;color:#b4b4b4;letter-spacing:0.04px">Прем./Диск.</div>
<div class="t" id="val2" style="left:776.15px;top:69px;font-size:13px;font-weight:bold;color:#ffffff;letter-spacing:0.17px">-0.22%</div>
<div class="t" id="lab3" style="left:863.15px;top:69px;font-size:13px;font-weight:normal;color:#b4b4b4;letter-spacing:-0.04px">Ежедневный объем</div>
<div class="t" id="val3" style="left:1064.4px;top:69px;font-size:13px;font-weight:bold;color:#ffffff;letter-spacing:0.65px">72.76M</div>
<div class="t" id="lab4" style="left:1156.15px;top:69px;font-size:13px;font-weight:normal;color:#b4b4b4;letter-spacing:-0.01px">ОбъемТоргов</div>
<div class="t" id="val4" style="left:1320.65px;top:69px;font-size:13px;font-weight:bold;color:#ffffff;letter-spacing:0.14px">$3.74B</div>
<div class="t" id="lab5" style="left:1407.9px;top:69px;font-size:13px;font-weight:normal;color:#b4b4b4;letter-spacing:0.07px">ЧистыеАктивы</div>
<div class="t" id="val5" style="left:1580.4px;top:69px;font-size:13px;font-weight:bold;color:#ffffff;letter-spacing:0.26px">$70.91B</div>
<div class="t" id="lab6" style="left:29.4px;top:102.75px;font-size:13px;font-weight:normal;color:#b4b4b4;letter-spacing:-0.21px">Коэффициент доли ETF BTC</div>
<div class="t" id="val6" style="left:283.4px;top:102.75px;font-size:13px;font-weight:bold;color:#ffffff;letter-spacing:0.12px">3.90%</div>
<div class="yl" style="right:1694.5px;top:151.5px">1.2B</div>
<div class="yl" style="left:1675.2px;top:151.5px">180,000</div>
<div class="yl" style="right:1694.5px;top:231.5px">900M</div>
<div class="yl" style="left:1675.2px;top:231.5px">150,000</div>
<div class="yl" style="right:1694.5px;top:311.2px">600M</div>
<div class="yl" style="left:1675.2px;top:311.2px">120,000</div>
<div class="yl" style="right:1694.5px;top:390.75px">300M</div>
<div class="yl" style="left:1675.2px;top:390.75px">90,000</div>
<div class="yl" style="right:1694.5px;top:470.55px">0</div>
<div class="yl" style="left:1675.2px;top:470.55px">60,000</div>
<div class="yl" style="right:1694.5px;top:551.1px">-300M</div>
<div class="yl" style="left:1675.2px;top:551.1px">30,000</div>
<div class="yl" style="right:1694.5px;top:630.5px">-600M</div>
<div class="yl" style="left:1675.2px;top:630.5px">0</div>
<div class="xl" style="left:14.8px;top:644.6px;width:80px;text-align:center;letter-spacing:0.42px">2024/01/11</div>
<div class="xl" style="left:558.5px;top:644.6px;width:80px;text-align:center;letter-spacing:0.42px">2024/08/30</div>
<div class="xl" style="left:1102.3px;top:644.6px;width:80px;text-align:center;letter-spacing:0.42px">2025/04/23</div>
<div class="xl" style="left:1625.7px;top:644.6px;width:80px;text-align:center;letter-spacing:0.42px">2025/12/02</div>
</body></html>
